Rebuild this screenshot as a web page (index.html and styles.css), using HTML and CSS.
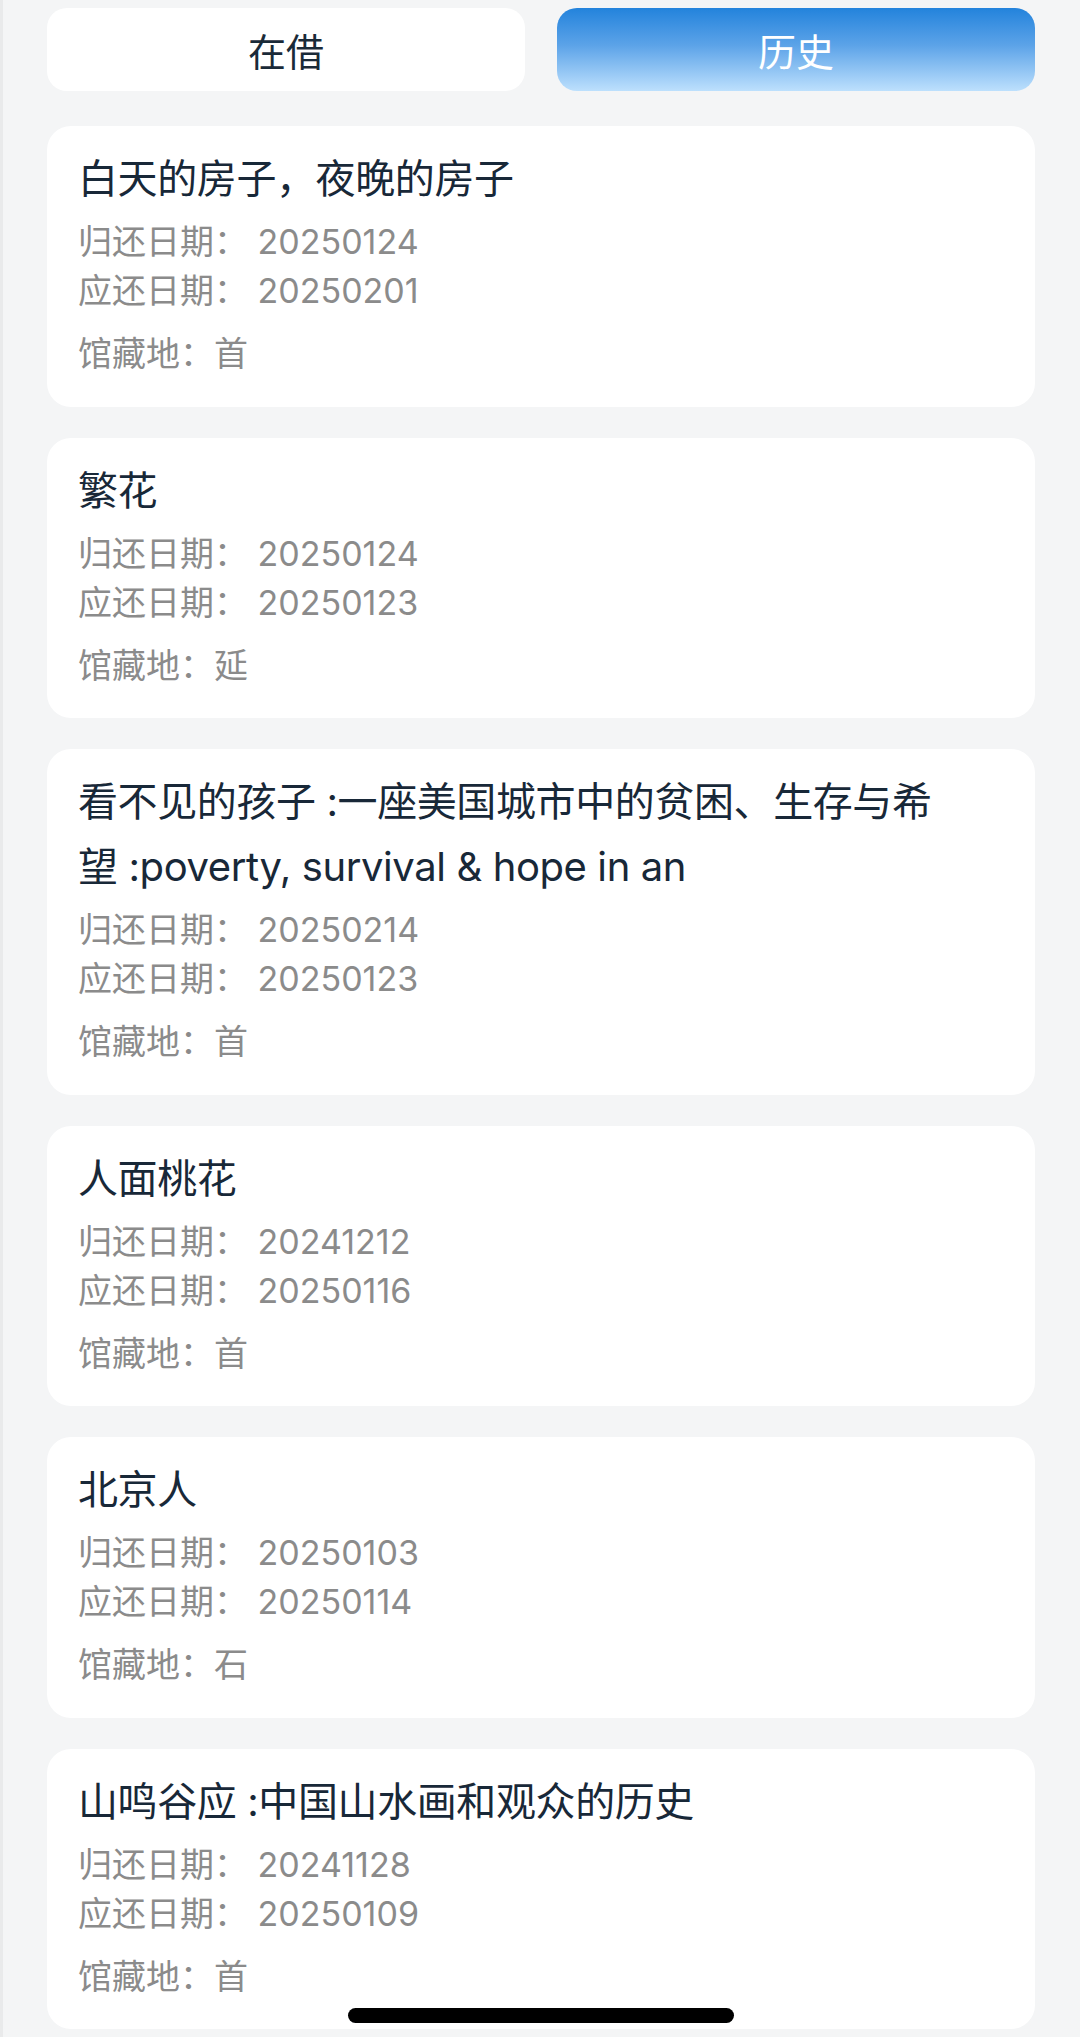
FILE: index.html
```html
<!DOCTYPE html>
<html lang="zh-CN">
<head>
<meta charset="utf-8">
<title>借阅历史</title>
<link rel="stylesheet" href="styles.css">
</head>
<body>
<div class="page">
  <div class="tabs">
    <div class="tab">在借</div>
    <div class="tab tab-active">历史</div>
  </div>
  <div class="list">
    <div class="card">
      <div class="title">白天的房子，夜晚的房子</div>
      <div class="info">归还日期： 20250124</div>
      <div class="info">应还日期： 20250201</div>
      <div class="info loc">馆藏地：首</div>
    </div>
    <div class="card">
      <div class="title">繁花</div>
      <div class="info">归还日期： 20250124</div>
      <div class="info">应还日期： 20250123</div>
      <div class="info loc">馆藏地：延</div>
    </div>
    <div class="card">
      <div class="title">看不见的孩子 :一座美国城市中的贫困、生存与希望 :poverty, survival &amp; hope in an</div>
      <div class="info">归还日期： 20250214</div>
      <div class="info">应还日期： 20250123</div>
      <div class="info loc">馆藏地：首</div>
    </div>
    <div class="card">
      <div class="title">人面桃花</div>
      <div class="info">归还日期： 20241212</div>
      <div class="info">应还日期： 20250116</div>
      <div class="info loc">馆藏地：首</div>
    </div>
    <div class="card">
      <div class="title">北京人</div>
      <div class="info">归还日期： 20250103</div>
      <div class="info">应还日期： 20250114</div>
      <div class="info loc">馆藏地：石</div>
    </div>
    <div class="card">
      <div class="title">山鸣谷应 :中国山水画和观众的历史</div>
      <div class="info">归还日期： 20241128</div>
      <div class="info">应还日期： 20250109</div>
      <div class="info loc">馆藏地：首</div>
    </div>
  </div>
</div>
<div class="home-indicator"></div>
</body>
</html>
```
FILE: styles.css
```css
* { box-sizing: border-box; }
html, body {
  margin: 0;
  padding: 0;
}
body {
  background: #f4f5f6;
  font-family: "Inter", "Noto Sans CJK SC", sans-serif;
  width: 1080px;
  height: 2037px;
  overflow: hidden;
  border-left: 3px solid #e9eaeb;
}
.page {
  padding: 8px 45px 0 44px;
}
.tabs {
  display: grid;
  grid-template-columns: 1fr 1fr;
  column-gap: 32px;
}
.tab {
  height: 83px;
  border-radius: 20px;
  background: #ffffff;
  color: #1a2a38;
  font-size: 38px;
  display: flex;
  align-items: center;
  justify-content: center;
  font-family: "Noto Sans CJK SC", sans-serif;
}
.tab-active {
  background: linear-gradient(to bottom, #2383dc 0%, #5ca3e8 45%, #bde0fd 100%);
  color: #ffffff;
}
.list {
  margin-top: 35px;
  display: flex;
  flex-direction: column;
  gap: 31px;
}
.card {
  background: #ffffff;
  border-radius: 24px;
  padding: 20px 85px 28.5px 31px;
}
.title {
  font-size: 40px;
  line-height: 65px;
  color: #182838;
  letter-spacing: -0.4px;
}
.info {
  font-size: 34px;
  line-height: 49px;
  color: #8b8b8b;
}
.title + .info {
  margin-top: 6px;
}
.loc {
  margin-top: 14px;
}
.home-indicator {
  position: absolute;
  left: 348px;
  top: 2008px;
  width: 386px;
  height: 15px;
  border-radius: 8px;
  background: #000000;
}
```
